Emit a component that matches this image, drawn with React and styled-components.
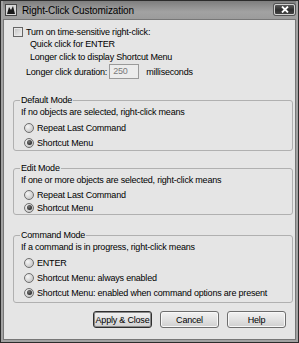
import React from 'react';
import styled, { createGlobalStyle } from 'styled-components';

const Global = createGlobalStyle`
  html, body {
    margin: 0;
    padding: 0;
    background: #fff;
  }

  body {
    font-family: "Liberation Sans", Arial, sans-serif;
    font-size: 9px;
    letter-spacing: -0.2px;
    color: #000;
  }
`;

const Window = styled.div`
  box-sizing: border-box;
  display: flex;
  flex-direction: column;
  width: 299px;
  height: 343px;
  border: 1px solid #2c2c2c;
  background: #a2a2a2;
  padding: 0 2px 2px 2px;
`;

const TitleBar = styled.div`
  align-items: center;
  background: linear-gradient(#7e7e7e, #a2a2a2 60%, #9c9c9c);
  display: flex;
  height: 18px;
  padding: 0 1px 0 2px;

  .title {
    flex: 1;
    font-size: 10px;
    letter-spacing: -0.1px;
    margin-left: 5px;
    color: #000;
  }
`;

const CloseButton = styled.div`
  align-items: center;
  background: linear-gradient(#5a5a5a, #2e2e2e 55%, #444);
  border: 1px solid #d0d0d0;
  border-radius: 2px;
  box-shadow: 0 0 0 1px #555;
  display: flex;
  height: 9px;
  justify-content: center;
  width: 19px;
  margin-top: -2px;
`;

const Body = styled.div`
  background: #e5e5e5;
  border: 1px solid #777;
  display: flex;
  flex: 1;
  flex-direction: column;
  padding: 0 2px 0 9px;
`;

const CheckRow = styled.label`
  align-items: center;
  display: flex;
  gap: 3px;
  height: 12px;
  margin-top: 6px;
`;

const Checkbox = styled.span`
  background: linear-gradient(135deg, #c2c2c2, #f2f2f2);
  border: 1px solid #666;
  box-shadow: inset 0 0 0 1px #e8e8e8;
  box-sizing: border-box;
  height: 10px;
  width: 10px;
`;

const Line = styled.div`
  height: 12px;
  line-height: 12px;
  margin-left: ${(p) => p.$indent || 0}px;
  margin-top: ${(p) => p.$top || 0}px;
  white-space: nowrap;
`;

const DurationRow = styled.div`
  align-items: center;
  display: flex;
  height: 15px;
  margin: 1px 0 0 13px;

  .ms {
    margin-left: 7px;
  }
`;

const NumberBox = styled.div`
  background: #ececec;
  border: 1px solid #9a9a9a;
  box-sizing: border-box;
  color: #7a7a7a;
  height: 15px;
  line-height: 13px;
  margin-left: 2px;
  padding-left: 3px;
  width: 30px;
`;

const Group = styled.fieldset`
  border: 1px solid #b0b0b0;
  border-radius: 3px;
  margin: ${(p) => p.$top}px 0 0 0;
  min-width: 0;
  padding: 0 2px ${(p) => p.$bottom || 0}px 7px;

  legend {
    line-height: 12px;
    margin-left: -1px;
    padding: 0 1px;
  }
`;

const RadioRow = styled.label`
  align-items: center;
  display: flex;
  gap: 3px;
  height: ${(p) => p.$h}px;
  margin-left: 3px;
  margin-top: ${(p) => (p.$first ? 2 : 0)}px;
  white-space: nowrap;
`;

const RadioDot = styled.span`
  align-items: center;
  background: radial-gradient(circle at 35% 35%, #f6f6f6, #b8b8b8);
  border: 1px solid #6e6e6e;
  border-radius: 50%;
  box-sizing: border-box;
  display: flex;
  flex: none;
  height: 10px;
  justify-content: center;
  width: 10px;

  &::after {
    background: radial-gradient(circle at 40% 35%, #777, #111);
    border-radius: 50%;
    content: '';
    display: ${(p) => (p.$on ? 'block' : 'none')};
    height: 5px;
    width: 5px;
  }
`;

const ButtonRow = styled.div`
  display: flex;
  gap: 8px;
  justify-content: flex-end;
  margin-top: 8px;
  padding-right: 7px;
`;

const Button = styled.button`
  background: linear-gradient(#f2f2f2, #e2e2e2 50%, #cfcfcf);
  border: 1px solid ${(p) => (p.$primary ? '#2f2f2f' : '#6e6e6e')};
  border-radius: 3px;
  box-shadow: inset 0 0 0 1px ${(p) => (p.$primary ? '#8a8a8a' : '#f8f8f8')};
  color: #000;
  font-family: "Liberation Sans", Arial, sans-serif;
  font-size: 9px;
  letter-spacing: -0.2px;
  height: 17px;
  padding: 0;
  width: 59px;
`;

const AppIcon = () => (
  <svg width="12" height="12" viewBox="0 0 12 12">
    <rect x="0.5" y="0.5" width="11" height="11" fill="#d8d8d8" stroke="#444" />
    <path d="M2 10 L4 3 L6 6 L8 2 L10 10 Z" fill="#1a1a1a" />
  </svg>
);

const CloseX = () => (
  <svg width="8" height="7" viewBox="0 0 8 7">
    <path d="M1 0.5 L7 6.5 M7 0.5 L1 6.5" stroke="#fff" strokeWidth="1.8" />
  </svg>
);

const Radio = ({ label, on, first, h = 15 }) => (
  <RadioRow $first={first} $h={h}>
    <RadioDot $on={on} />
    {label}
  </RadioRow>
);

export default function App() {
  return (
    <>
      <Global />
      <Window>
        <TitleBar>
          <AppIcon />
          <span className="title">Right-Click Customization</span>
          <CloseButton>
            <CloseX />
          </CloseButton>
        </TitleBar>

        <Body>
          <CheckRow>
            <Checkbox />
            Turn on time-sensitive right-click:
          </CheckRow>
          <Line $indent={17}>Quick click for ENTER</Line>
          <Line $indent={17} $top={1}>
            Longer click to display Shortcut Menu
          </Line>
          <DurationRow>
            Longer click duration:
            <NumberBox>250</NumberBox>
            <span className="ms">milliseconds</span>
          </DurationRow>

          <Group $top={15}>
            <legend>Default Mode</legend>
            <Line>If no objects are selected, right-click means</Line>
            <Radio first label="Repeat Last Command" />
            <Radio on label="Shortcut Menu" />
          </Group>

          <Group $top={11}>
            <legend>Edit Mode</legend>
            <Line>If one or more objects are selected, right-click means</Line>
            <Radio first h={13} label="Repeat Last Command" />
            <Radio on h={13} label="Shortcut Menu" />
          </Group>

          <Group $top={14} $bottom={2}>
            <legend>Command Mode</legend>
            <Line>If a command is in progress, right-click means</Line>
            <Radio first label="ENTER" />
            <Radio label="Shortcut Menu: always enabled" />
            <Radio on label="Shortcut Menu: enabled when command options are present" />
          </Group>

          <ButtonRow>
            <Button $primary>Apply &amp; Close</Button>
            <Button>Cancel</Button>
            <Button>Help</Button>
          </ButtonRow>
        </Body>
      </Window>
    </>
  );
}
